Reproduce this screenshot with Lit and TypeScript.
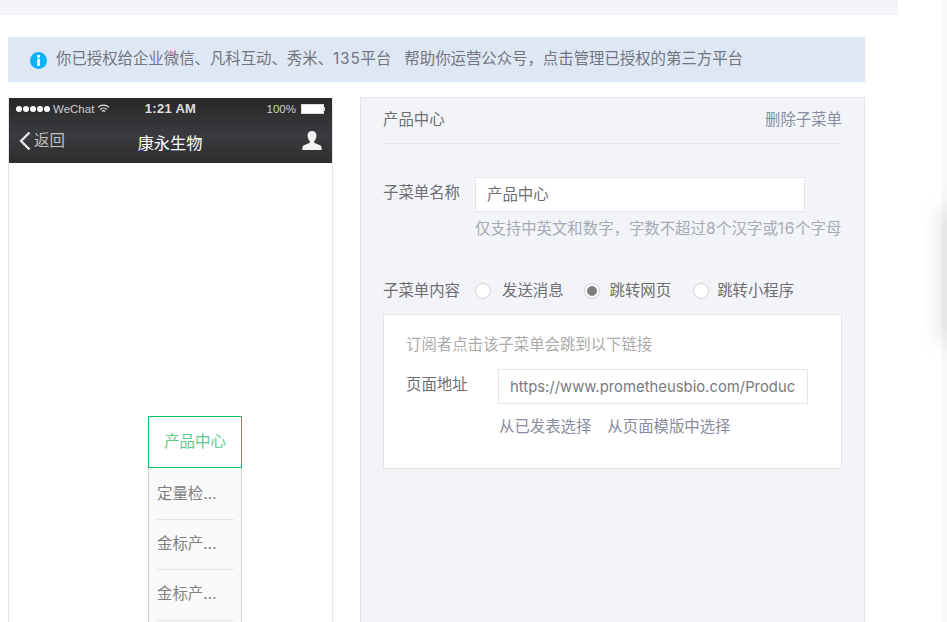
import { LitElement, css, html } from "lit";
import { customElement } from "lit/decorators.js";

const SUB_ITEMS = ["定量检…", "金标产…", "金标产…"];

@customElement("app-root")
export class AppRoot extends LitElement {
  static styles = css`
    :host {
      display: block;
      position: relative;
      width: 947px;
      height: 622px;
      overflow: hidden;
      background: #fff;
      font-family: "Inter", "Noto Sans CJK SC", sans-serif;
      font-size: 15.4px;
      line-height: 22px;
      color: #6e6e72;
    }
    .top-band {
      width: 898px;
      height: 15px;
      background: #f3f4f8;
    }
    .notice {
      display: flex;
      align-items: center;
      gap: 9px;
      height: 45px;
      width: 835px;
      margin: 22px 0 15px 8px;
      padding-left: 22px;
      background: #dee8f5;
      color: #74747e;
      white-space: pre;
    }
    .notice svg {
      margin-top: 1px;
    }
    .notice span {
      margin-top: -1px;
    }
    .notice .num,
    .hint .num {
      letter-spacing: 0.8px;
    }
    .main {
      display: flex;
      gap: 27px;
      margin-left: 8px;
      align-items: flex-start;
    }

    /* phone */
    .phone {
      width: 323px;
      height: 640px;
      border: 1px solid #e4e5ea;
      border-top: 0;
      flex: none;
    }
    .phone-head {
      height: 65px;
      margin-top: 1px;
      background: linear-gradient(#28282a, #3a3b3e 58%, #2d2d2f);
      color: #fff;
    }
    .status {
      display: grid;
      grid-template-columns: 1fr auto 1fr;
      align-items: center;
      height: 21px;
      padding: 0 7px;
      font-family: "Liberation Sans", sans-serif;
      font-size: 11.5px;
      color: #cfcfcf;
    }
    .status .left {
      display: flex;
      align-items: center;
      gap: 3px;
    }
    .status .time {
      font-weight: bold;
      font-size: 13px;
      color: #dedede;
      letter-spacing: 0.3px;
    }
    .status .right {
      display: flex;
      justify-content: flex-end;
      align-items: center;
      gap: 5px;
    }
    .dots {
      display: flex;
      gap: 1px;
    }
    .dots i {
      width: 6px;
      height: 6px;
      border-radius: 50%;
      background: #fff;
    }
    .battery {
      display: flex;
      align-items: center;
    }
    .battery b {
      width: 21px;
      height: 8px;
      background: #fff;
      border: 1px solid #ddd;
    }
    .battery i {
      width: 1px;
      height: 4px;
      background: #ddd;
    }
    .nav {
      display: grid;
      grid-template-columns: 1fr auto 1fr;
      align-items: center;
      height: 43px;
      padding: 0 10px;
    }
    .back {
      display: flex;
      align-items: center;
      gap: 3px;
      color: #c0c0c0;
    }
    .title {
      font-size: 16.2px;
      color: #fff;
      margin: 4px 1px 0 0;
    }
    .user {
      justify-self: end;
      display: flex;
    }
    .phone-body {
      padding: 253px 0 0 139px;
    }
    .sub {
      width: 92px;
      padding-bottom: 20px;
      border: 1px solid #cfcfcf;
      border-top: 0;
      background: #fafafa;
    }
    .sub .active {
      width: 92px;
      height: 50px;
      margin: 0 -1px;
      border: 1px solid #07bf63;
      background: #fff;
      color: #62c98c;
      display: flex;
      align-items: center;
      justify-content: center;
    }
    .sub .item {
      height: 49px;
      margin: 0 7px 0 8px;
      border-bottom: 1px solid #e6e6e6;
      line-height: 48px;
      color: #808080;
      white-space: nowrap;
    }
    .sub .item:nth-child(2) {
      height: 51px;
      line-height: 52px;
    }
    .sub .item:nth-child(4) {
      height: 50px;
    }

    /* panel */
    .panel {
      width: 459px;
      height: 600px;
      padding: 0 22px;
      flex: none;
      background: #f3f4f8;
      border: 1px solid #e4e5ea;
    }
    .panel-head {
      display: flex;
      justify-content: space-between;
      align-items: center;
      height: 45px;
      border-bottom: 1px solid #e6e7ec;
    }
    .panel-head span {
      margin-top: -2px;
    }
    .link {
      color: #8a8ca0;
    }
    .row-name {
      display: flex;
      margin-top: 33px;
    }
    .label {
      width: 92px;
      flex: none;
      line-height: 30px;
    }
    .row-name .label,
    .row-url .label {
      padding-top: 1px;
    }
    .field {
      box-sizing: border-box;
      background: #fff;
      border: 1px solid #e4e5ea;
      height: 35px;
      display: flex;
      align-items: center;
      white-space: nowrap;
    }
    .name-field {
      width: 330px;
      padding: 0 0 0 11px;
    }
    .hint {
      margin: 6px -2px 0 0;
      color: #a6abb6;
      white-space: nowrap;
      line-height: 22px;
    }
    .row-type {
      display: flex;
      align-items: center;
      margin-top: 39px;
      height: 24px;
      white-space: nowrap;
    }
    .radio {
      width: 14px;
      height: 14px;
      border: 1px solid #d4d5da;
      border-radius: 50%;
      background: #fff;
      display: flex;
      align-items: center;
      justify-content: center;
      margin: 0 10px 0 0;
      flex: none;
    }
    .radio.on::after {
      content: "";
      width: 10px;
      height: 10px;
      border-radius: 50%;
      background: #808080;
    }
    .opt {
      display: flex;
      align-items: center;
      margin-right: 22px;
    }
    .label + .opt {
      margin-right: 20px;
    }
    .label + .opt .radio {
      margin-right: 11px;
    }
    .opt:last-child .radio {
      margin-right: 8px;
    }
    .box {
      margin-top: 11px;
      box-sizing: border-box;
      height: 155px;
      padding: 18px 22px 0;
      background: #fff;
      border: 1px solid #e4e5ea;
    }
    .box-hint {
      color: #ababab;
      line-height: 24px;
    }
    .row-url {
      display: flex;
      margin-top: 12px;
    }
    .row-url .label {
      color: #6e6e72;
    }
    .url-field {
      width: 310px;
      padding: 0 11px;
    }
    .url-clip {
      display: block;
      width: 286px;
      overflow: hidden;
      font-size: 14.85px;
      color: #7a7a80;
    }
    .pick {
      display: flex;
      gap: 16px;
      margin: 11px 0 0 93px;
      line-height: 24px;
    }

    /* page edge */
    .edge {
      position: absolute;
      top: 0;
      right: 0;
      bottom: 0;
      width: 5px;
      background: #f8f8f9;
    }
    .edge-shadow {
      position: absolute;
      top: 215px;
      right: -10px;
      width: 10px;
      height: 120px;
      box-shadow: 0 0 24px 6px rgba(0, 0, 0, 0.13);
    }
  `;

  render() {
    return html`
      <div class="top-band"></div>
      <div class="notice">
        <svg width="17" height="17" viewBox="0 0 17 17">
          <circle cx="8.5" cy="8.5" r="8.5" fill="#0db2f5"></circle>
          <rect x="7.2" y="3" width="2.8" height="2.6" fill="#fff"></rect>
          <rect x="7.2" y="6.8" width="2.8" height="7" fill="#fff"></rect>
        </svg>
        <span>你已授权给企业微信、凡科互动、秀米、<span class="num">135</span>平台   帮助你运营公众号，点击管理已授权的第三方平台</span>
      </div>
      <div class="main">
        <div class="phone">
          <div class="phone-head">
            <div class="status">
              <div class="left">
                <span class="dots"><i></i><i></i><i></i><i></i><i></i></span>
                <span>WeChat</span>
                <svg width="13" height="10" viewBox="0 0 13 10" fill="none" stroke="#ddd" stroke-width="1.3">
                  <path d="M1 3.400a8 8 0 0 1 11 0M3 5.500a5 5 0 0 1 7 0M4.900 7.400a2.400 2.400 0 0 1 3.200 0"></path>
                </svg>
              </div>
              <span class="time">1:21 AM</span>
              <div class="right">
                <span>100%</span>
                <span class="battery"><b></b><i></i></span>
              </div>
            </div>
            <div class="nav">
              <div class="back">
                <svg width="12" height="20" viewBox="0 0 12 20" fill="none" stroke="#e8e8e8" stroke-width="2.4">
                  <path d="M10.500 1.500 2 10l8.500 8.500"></path>
                </svg>
                <span>返回</span>
              </div>
              <span class="title">康永生物</span>
              <div class="user">
                <svg width="20" height="20" viewBox="0 0 20 20" fill="#f2f2f2">
                  <path d="M10 0c3 0 4.600 2.200 4.400 5-.1 2.200-1 4-2.200 5.200-.5 1 .2 1.600 1.600 2.200 2.600 1 5.200 1.800 5.700 3.400.2 1 .2 2.400.2 3.200H.3c0-.8 0-2.200.2-3.200.5-1.600 3.100-2.400 5.700-3.400 1.400-.6 2.100-1.200 1.600-2.200C6.600 9 5.700 7.200 5.600 5 5.400 2.200 7 0 10 0z"></path>
                </svg>
              </div>
            </div>
          </div>
          <div class="phone-body">
            <div class="sub">
              <div class="active">产品中心</div>
              ${SUB_ITEMS.map((item) => html`<div class="item">${item}</div>`)}
            </div>
          </div>
        </div>
        <div class="panel">
          <div class="panel-head">
            <span>产品中心</span>
            <span class="link">删除子菜单</span>
          </div>
          <div class="row-name">
            <span class="label">子菜单名称</span>
            <div>
              <div class="field name-field">产品中心</div>
              <div class="hint">仅支持中英文和数字，字数不超过<span class="num">8</span>个汉字或<span class="num">16</span>个字母</div>
            </div>
          </div>
          <div class="row-type">
            <span class="label">子菜单内容</span>
            <span class="opt"><span class="radio"></span>发送消息</span>
            <span class="opt"><span class="radio on"></span>跳转网页</span>
            <span class="opt"><span class="radio"></span>跳转小程序</span>
          </div>
          <div class="box">
            <div class="box-hint">订阅者点击该子菜单会跳到以下链接</div>
            <div class="row-url">
              <span class="label">页面地址</span>
              <div class="field url-field">
                <span class="url-clip">https://www.prometheusbio.com/Produc</span>
              </div>
            </div>
            <div class="pick">
              <span class="link">从已发表选择</span>
              <span class="link">从页面模版中选择</span>
            </div>
          </div>
        </div>
      </div>
      <div class="edge"></div>
      <div class="edge-shadow"></div>
    `;
  }
}
